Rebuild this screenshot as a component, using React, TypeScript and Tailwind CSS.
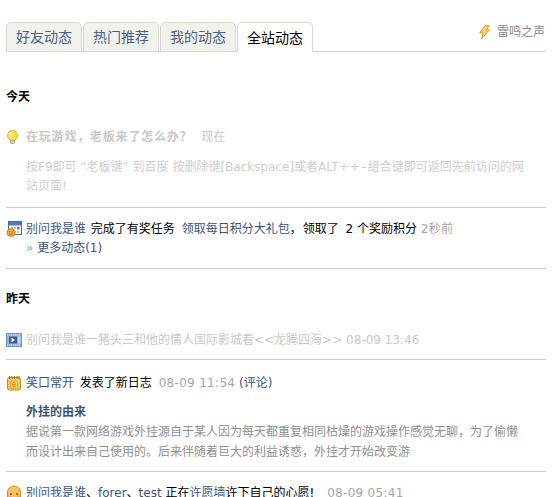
import React from "react";

const F = "font-['DejaVu_Sans','Noto_Sans_CJK_SC',sans-serif]";

function Tab({ label, active }: { label: string; active?: boolean }) {
  return active ? (
    <div className="-mb-px mr-px flex h-[30px] w-[76px] items-center justify-center rounded-t-[5px] border border-b-0 border-[#d8d8cc] bg-white text-[14px] text-black">
      {label}
    </div>
  ) : (
    <div className="-mb-px mr-px flex h-[30px] w-[76px] items-center justify-center rounded-t-[5px] border border-[#d8d8cc] bg-[#f2f2ec] text-[14px] text-[#4a6285]">
      {label}
    </div>
  );
}

const Bulb = () => (
  <svg width="16" height="16" viewBox="0 0 16 16" className="shrink-0">
    <circle cx="6.5" cy="6.5" r="5" fill="#fbe04a" stroke="#d9b23a" />
    <circle cx="5" cy="4.8" r="1.6" fill="#fff6b8" />
    <rect x="4.5" y="11.5" width="4" height="3" fill="#c9c9b0" stroke="#a9a98c" strokeWidth="0.7" />
  </svg>
);

const Calendar = () => (
  <svg width="16" height="16" viewBox="0 0 16 16" className="shrink-0">
    <rect x="2.5" y="0.5" width="13" height="13" fill="#fff" stroke="#4c6a8c" />
    <rect x="3" y="1" width="12" height="3.5" fill="#4f7fb0" />
    <path d="M5 6h2v2H5zM8 6h2v2H8zM8 10h2v2H8zM11 10h2v2h-2z" fill="#a9bfd6" />
    <rect x="11" y="6" width="2.5" height="2.5" fill="#d8505a" />
    <circle cx="5" cy="11.5" r="4" fill="#f0a93a" stroke="#b8761e" strokeWidth="0.8" />
    <path d="M3 10.8h1M6 10.8h1M3.6 13h2.8" stroke="#8a4c10" strokeWidth="0.8" />
  </svg>
);

const Film = () => (
  <svg width="16" height="14" viewBox="0 0 16 14" className="shrink-0">
    <rect x="0.5" y="0.5" width="15" height="13" fill="#8fb3d9" stroke="#6f95bf" />
    <path d="M1 2h14M1 12h14" stroke="#e8f0f8" strokeWidth="1" strokeDasharray="1 1" />
    <rect x="3" y="3.5" width="8" height="7" fill="#3f5f8a" />
    <path d="M5.5 4.8l3.5 2.2-3.5 2.2z" fill="#fff" />
    <rect x="12" y="3.5" width="2.5" height="7" fill="#c5d9ee" />
  </svg>
);

const Blog = () => (
  <svg width="16" height="16" viewBox="0 0 16 16" className="shrink-0">
    <rect x="1.5" y="2.5" width="13" height="12.5" rx="2" fill="#fbc94e" stroke="#c98a1c" />
    <path d="M3.5 1v3M6 1v3M8.5 1v3M11 1v3M13 1v3" stroke="#8a6a20" strokeWidth="1" />
    <rect x="4.5" y="6" width="7" height="7" rx="1" fill="#fff3c4" stroke="#e09a20" />
    <path d="M6.5 7.5v4h2.5a1 1 0 000-2H6.5m0 0h2a1 1 0 000-2h-2" fill="none" stroke="#d9801a" strokeWidth="0.9" />
  </svg>
);

const Face = () => (
  <svg width="16" height="16" viewBox="0 0 16 16" className="shrink-0">
    <path d="M1.5 15V7a6.5 6 0 0113 0v8z" fill="#fbc25c" stroke="#c98a3c" />
    <circle cx="5" cy="9" r="1.1" fill="#a35c1c" />
    <circle cx="11" cy="9" r="1.1" fill="#a35c1c" />
    <rect x="2.5" y="10.5" width="2.5" height="2" fill="#f59a7a" />
    <rect x="11" y="10.5" width="2.5" height="2" fill="#f59a7a" />
  </svg>
);

const Bolt = () => (
  <svg width="13" height="15" viewBox="0 0 13 17" className="shrink-0">
    <path d="M7 .8L12 .8 8.8 5.5 12 5.5 3 16 5 9 1 9z" fill="#fbd25a" stroke="#d98f3c" strokeWidth="1" strokeLinejoin="round" />
  </svg>
);

const A = ({ children }: { children: React.ReactNode }) => <span className="text-[#3b5478]">{children}</span>;
const G = ({ children }: { children: React.ReactNode }) => <span className="tracking-[0.3px] text-[#a5a5a5]">{children}</span>;

export default function App() {
  return (
    <div className={`${F} h-[497px] w-[555px] overflow-hidden bg-white text-[12px] leading-[20px] text-black`}>
      <div className="mx-[6px] flex h-[52px] w-[540px] items-end justify-between border-b border-[#cfcfc8]">
        <div className="flex">
          <Tab label="好友动态" />
          <Tab label="热门推荐" />
          <Tab label="我的动态" />
          <Tab label="全站动态" active />
        </div>
        <div className="mb-[9px] mr-[1px] flex items-center gap-[6px] text-[#8a8a8a]">
          <Bolt />
          <span>雷鸣之声</span>
        </div>
      </div>

      <div className="ml-[6px] mt-[35px] w-[540px]">
        <h2 className="text-[12px] font-bold leading-[20px]">今天</h2>

        <div className="mt-[20px] border-b border-[#cccccc] pb-[11px]">
          <div className="flex h-[20px] items-center gap-[4px] text-[#c8c8c8]">
            <Bulb />
            <span><b className="tracking-[0.8px]">在玩游戏，老板来了怎么办？</b> <span className="ml-[5px]">现在</span></span>
          </div>
          <div className="mt-[11px] pl-[20px] pr-[12px] leading-[19px] text-[#cdcdcd]">
            按F9即可 “老板键” 到百度 按删除键[Backspace]或者ALT<span className="tracking-[1px]">++–</span>组合键即可返回先前访问的网站页面!
          </div>
        </div>

        <div className="border-b border-[#cccccc] pb-[10px] pt-[11px]">
          <div className="flex h-[20px] items-center gap-[4px]">
            <Calendar />
            <span className="whitespace-nowrap">
              <A>别问我是谁</A> <span className="ml-px">完成了有奖任务</span> <A><span className="ml-[3px]">领取每日积分大礼包</span></A>，<span className="ml-px">领取了</span> <span className="ml-[3px]">2</span> 个奖励积分 <G>2秒前</G>
            </span>
          </div>
          <div className="mt-[-1px] pl-[20px] leading-[20px] text-[#3b5478]"><span className="text-[#88aaaa]">»</span> 更多动态(1)</div>
        </div>

        <h2 className="mt-[20px] text-[12px] font-bold leading-[20px]">昨天</h2>

        <div className="mt-[21px] border-b border-[#cccccc] pb-[9px]">
          <div className="flex h-[20px] items-center gap-[4px] whitespace-nowrap text-[#c8c8c8]">
            <Film />
            <span>别问我是谁一猪头三和他的情人国际影城看&lt;&lt;龙腾四海&gt;&gt; 08-09 13:46</span>
          </div>
        </div>

        <div className="border-b border-[#cccccc] pb-[9px] pt-[13px]">
          <div className="flex h-[20px] items-center gap-[4px] whitespace-nowrap">
            <Blog />
            <span><A>笑口常开</A> <span className="ml-[2px]">发表了新日志</span> <span className="ml-[3px]"><G>08-09 11:54</G></span> <A>(评论)</A></span>
          </div>
          <div className="mt-[9px] pl-[20px] font-bold text-[#3b5478]">外挂的由来</div>
          <div className="pl-[20px] pr-[26px] text-[#8f8f8f]">
            据说第一款网络游戏外挂源自于某人因为每天都重复相同枯燥的游戏操作感觉无聊，为了偷懒而设计出来自己使用的。后来伴随着巨大的利益诱惑，外挂才开始改变游
          </div>
        </div>

        <div className="pt-[11px]">
          <div className="flex h-[20px] items-center gap-[4px] whitespace-nowrap">
            <Face />
            <span><A>别问我是谁</A>、<A>forer</A>、<A>test</A> 正在<A>许愿墙</A>许下自己的心愿! <span className="ml-[9px]"><G>08-09 05:41</G></span></span>
          </div>
        </div>
      </div>
    </div>
  );
}
